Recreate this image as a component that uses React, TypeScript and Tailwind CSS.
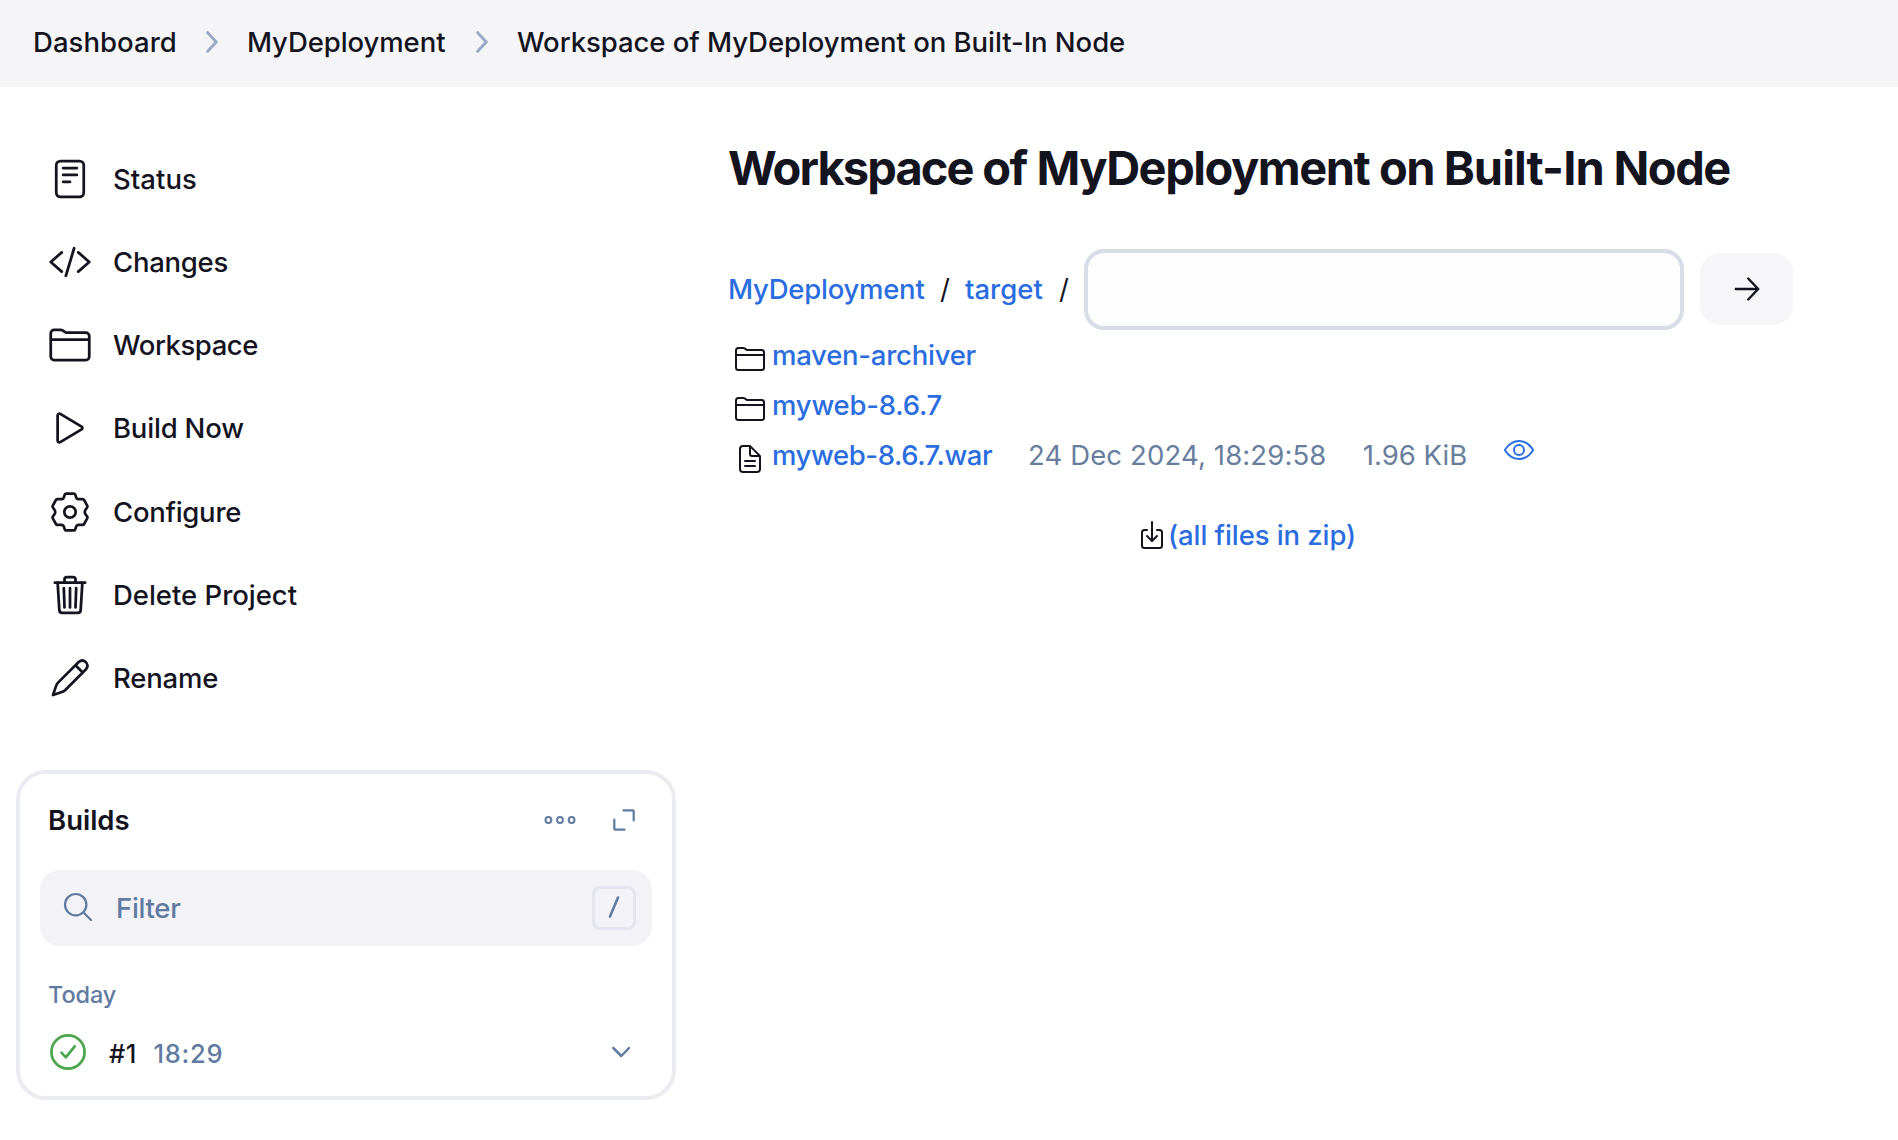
import type { ReactNode } from "react";
import {
  IoReaderOutline,
  IoCodeSlashOutline,
  IoFolderOutline,
  IoPlayOutline,
  IoTrashOutline,
  IoDocumentTextOutline,
  IoDownloadOutline,
  IoEyeOutline,
} from "react-icons/io5";

const GearIcon = () => (
  <svg viewBox="0 0 44 44" className="size-11" fill="none" stroke="currentColor" strokeWidth="2.7" strokeLinejoin="round">
    <circle cx="22" cy="22" r="5.7" />
    <path d="M18.2 3.6h7.6q1 0 1.400 1l1.100 3.100q.5 1.400 2 1.500l4.300-.1q1 0 1.500.9l3.100 5.700q.5.900-.1 1.800l-1.900 2.700q-.8 1.800 0 3.600l1.900 2.700q.6.900.1 1.800l-3.100 5.700q-.5.900-1.500.9l-4.300-.1q-1.500.1-2 1.500l-1.100 3.100q-.4 1-1.400 1h-7.600q-1 0-1.400-1l-1.100-3.100q-.5-1.400-2-1.500l-4.300.1q-1 0-1.500-.9l-3.100-5.700q-.5-.9.100-1.800l1.900-2.700q.8-1.800 0-3.600l-1.900-2.700q-.6-.9-.1-1.800l3.100-5.700q.5-.9 1.500-.9l4.300.1q1.500-.1 2-1.500l1.100-3.100q.4-1 1.400-1z" />
  </svg>
);

const PencilIcon = () => (
  <svg viewBox="0 0 44 44" className="size-11" fill="none" stroke="currentColor" strokeWidth="2.7" strokeLinejoin="round" strokeLinecap="round">
    <path d="M5 39L8.300 29.400Q9 27.700 10.300 26.400L30.700 6Q34.300 2.900 37.800 6.100Q41 9.600 38 13.300L17.600 33.700Q16.300 35 14.600 35.700Z" />
    <path d="M28 9.800l6.200 6.200" />
  </svg>
);

const tasks: { label: string; icon: ReactNode; spacing: string }[] = [
  { label: "Status", icon: <IoReaderOutline className="size-11" />, spacing: "tracking-[0.04px]" },
  { label: "Changes", icon: <IoCodeSlashOutline className="size-11" />, spacing: "tracking-[-0.27px]" },
  { label: "Workspace", icon: <IoFolderOutline className="size-11" />, spacing: "tracking-[-0.45px]" },
  { label: "Build Now", icon: <IoPlayOutline className="size-11" />, spacing: "tracking-[-0.2px]" },
  { label: "Configure", icon: <GearIcon />, spacing: "tracking-[-0.28px]" },
  { label: "Delete Project", icon: <IoTrashOutline className="size-11" />, spacing: "tracking-[-0.02px]" },
  { label: "Rename", icon: <PencilIcon />, spacing: "tracking-[-0.2px]" },
];

const Chevron = () => (
  <svg viewBox="0 0 12 22" className="h-[22px] w-3 shrink-0 text-[#9aa9c6]" fill="none" stroke="currentColor" strokeWidth="3" strokeLinecap="round" strokeLinejoin="round">
    <path d="M1.700 1.700L10.300 11l-8.600 9.300" />
  </svg>
);

function Breadcrumbs() {
  return (
    <header className="flex h-[87px] items-center gap-[29px] bg-[#f5f5f8] pb-[3px] pl-[33px] font-medium whitespace-nowrap">
      <span className="tracking-[0.05px]">Dashboard</span>
      <Chevron />
      <span className="mr-[1.5px] tracking-[-0.08px]">MyDeployment</span>
      <Chevron />
      <span className="tracking-[-0.05px]">Workspace of MyDeployment on Built-In Node</span>
    </header>
  );
}

function Builds() {
  return (
    <section className="mt-[50.4px] h-[330px] w-[660px] rounded-[30px] border-4 border-[#ebebf2]">
      <div className="flex h-24 items-center pr-[37px] pb-1 pl-[28px]">
        <h2 className="flex-1 font-semibold">Builds</h2>
        <svg viewBox="0 0 32 8" className="mr-[37px] h-2 w-8 text-[#607b9f]" fill="none" stroke="currentColor" strokeWidth="2">
          <circle cx="4.400" cy="4" r="2.900" />
          <circle cx="16" cy="4" r="2.900" />
          <circle cx="27.600" cy="4" r="2.900" />
        </svg>
        <svg viewBox="0 0 22 22" className="size-[22px] text-[#607b9f]" fill="none" stroke="currentColor" strokeWidth="2.200" strokeLinecap="round" strokeLinejoin="round">
          <path d="M10.500 1.300H19.800Q20.700 1.300 20.700 2.200V11.500M1.300 10.500V19.800Q1.300 20.700 2.200 20.700H11.500" />
        </svg>
      </div>
      <div className="mx-5 flex h-[76px] items-center rounded-[20px] bg-[#f2f2f7] pr-4 pl-[22px] text-[#607b9f]">
        <svg viewBox="0 0 32 32" className="size-8" fill="none" stroke="currentColor" strokeWidth="2.200" strokeLinecap="round">
          <circle cx="13.700" cy="12.700" r="10.700" />
          <path d="M21.700 20.700l7.300 7.300" />
        </svg>
        <span className="ml-[22px] flex-1 font-[450] tracking-[-0.3px]">Filter</span>
        <kbd className="flex size-11 items-center justify-center rounded-lg border-3 border-[#e4e4ee]">
          <svg viewBox="0 0 12 22" className="mb-0.5 h-[22px] w-3" stroke="currentColor" strokeWidth="2.600" strokeLinecap="round">
            <path d="M10 1.500L2 20.500" />
          </svg>
        </kbd>
      </div>
      <p className="mt-[29px] pl-[28px] text-[23.5px] leading-10 font-[450] tracking-[-0.1px] text-[#607b9f]">Today</p>
      <div className="mt-[17px] flex h-10 items-center pr-[42px] pl-[30px] text-[25.5px]">
        <svg viewBox="0 0 36 36" className="size-9 text-[#4ba64f]" fill="none" stroke="currentColor" strokeWidth="2.700" strokeLinecap="round" strokeLinejoin="round">
          <circle cx="18" cy="18" r="16.600" />
          <path d="M11.500 18.700l4.300 4.600L24.700 12.300" />
        </svg>
        <span className="ml-[23px] w-[44.5px] pt-[5px] font-medium tracking-[0.5px]">#1</span>
        <span className="flex-1 pt-[5px] font-[450] tracking-[0.7px] text-[#607b9f]">18:29</span>
        <svg viewBox="0 0 18 12" className="h-3 w-[18px] text-[#607b9f]" fill="none" stroke="currentColor" strokeWidth="2.500" strokeLinecap="round" strokeLinejoin="round">
          <path d="M1.300 2L9.300 10l7.700-8" />
        </svg>
      </div>
    </section>
  );
}

function Sidebar() {
  return (
    <aside className="w-[728px] shrink-0 pt-[50.25px] pl-4">
      <nav>
        {tasks.map((t) => (
          <a key={t.label} className="flex h-[83.2px] items-center pl-8 font-[450]">
            {t.icon}
            <span className={`ml-[21px] ${t.spacing}`}>{t.label}</span>
          </a>
        ))}
      </nav>
      <Builds />
    </aside>
  );
}

function Main() {
  return (
    <main className="flex-1 whitespace-nowrap">
      <h1 className="mt-[51px] text-[47px] leading-[60px] font-bold tracking-[-1.5px]">
        <span className="tracking-[-1.9px]">Workspace</span> of <span className="tracking-[-1.48px]">MyDeployment</span> on{" "}
        <span className="tracking-[-0.9px]">Built-In</span> Node
      </h1>
      <div className="mt-[51px] flex h-[81px] items-center">
        <a className="w-[212px] pb-0.5 font-[450] tracking-[-0.25px] text-[#2a6de0]">MyDeployment</a>
        <span className="w-[25px] pb-0.5">/</span>
        <a className="w-[94px] pb-0.5 font-[450] text-[#2a6de0]">target</a>
        <span className="w-[25px] pb-0.5">/</span>
        <input className="h-[81px] w-[600px] rounded-[20px] border-4 border-[#d6dde6] bg-[#fdfdfe]" />
        <button className="mb-[1px] ml-4 flex h-[72px] w-[93px] items-center justify-center rounded-[20px] bg-[#f6f6f9]">
          <svg viewBox="0 0 26 24" className="h-6 w-[26px]" fill="none" stroke="currentColor" strokeWidth="2.400" strokeLinecap="round" strokeLinejoin="round">
            <path d="M1.800 12H24.200M14.200 1.500L24.200 12 14.200 22.500" />
          </svg>
        </button>
      </div>
      <div className="flex h-[50px] items-center pl-1.5">
        <IoFolderOutline className="mt-[7px] size-8" />
        <a className="ml-1.5 font-[450] tracking-[-0.25px] text-[#2a6de0]">maven-archiver</a>
      </div>
      <div className="flex h-[50px] items-center pl-1.5">
        <IoFolderOutline className="mt-[7px] size-8" />
        <a className="ml-1.5 font-[450] tracking-[-0.2px] text-[#2a6de0]">myweb-8.6.7</a>
      </div>
      <div className="flex h-[50px] items-center pl-1.5">
        <IoDocumentTextOutline className="mt-[7px] size-8" />
        <a className="ml-1.5 w-[256px] font-[450] tracking-[-0.4px] text-[#2a6de0]">myweb-8.6.7.war</a>
        <span className="w-[334.7px] tracking-[0.13px] text-[#677e9d]">24 Dec 2024, 18:29:58</span>
        <span className="w-[140px] tracking-[0.02px] text-[#677e9d]">1.96 KiB</span>
        <IoEyeOutline className="mb-[10px] size-8 text-[#2a6de0]" />
      </div>
      <div className="mt-[35px] flex h-10 items-center pl-[408px]">
        <IoDownloadOutline className="size-8" />
        <a className="font-[450] tracking-[-0.08px] text-[#2a6de0]">(all files in zip)</a>
      </div>
    </main>
  );
}

export default function App() {
  return (
    <div className="h-[1140px] overflow-hidden bg-white font-[Inter,sans-serif] text-[27.5px] leading-10 text-[#14141f]">
      <Breadcrumbs />
      <div className="flex">
        <Sidebar />
        <Main />
      </div>
    </div>
  );
}
